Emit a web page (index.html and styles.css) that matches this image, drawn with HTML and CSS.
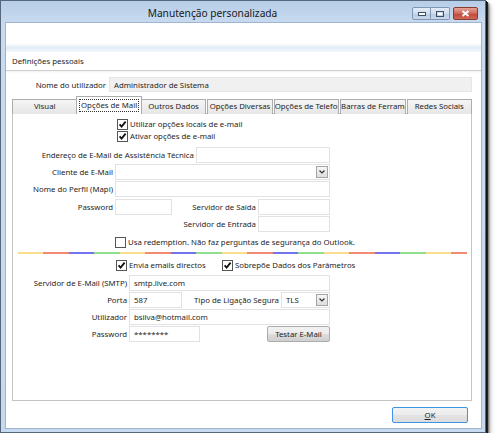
FILE: index.html
```html
<!DOCTYPE html>
<html lang="pt">
<head>
    <meta charset="UTF-8">
    <title>Manutenção personalizada</title>
<link rel="stylesheet" href="styles.css">
</head>
<body>

<div class="window">
    <!-- Title bar -->
    <div class="titlebar">
        <div class="title">Manutenção personalizada</div>
        <div class="controls">
            <span class="ctl min"><svg width="8" height="4" viewBox="0 0 8 4"><rect x="0.5" y="0.5" width="7" height="3" fill="#fff" stroke="#3d4f66"/></svg></span>
            <span class="ctl max"><svg width="8" height="6" viewBox="0 0 8 6"><rect x="0.5" y="0.5" width="7" height="5" fill="none" stroke="#3d4f66"/><rect x="2" y="2" width="4" height="2" fill="#fff"/></svg></span>
            <span class="ctl close"><svg width="9" height="7" viewBox="0 0 9 7"><path d="M1.5 1 L7.5 6 M7.5 1 L1.5 6" stroke="#fff" stroke-width="2"/></svg></span>
        </div>
    </div>

    <div class="client">
        <div class="banner"></div>
        <div class="section-title">Definições pessoais</div>

        <div class="user-row">
            <span class="user-label">Nome do utilizador</span>
            <div class="readonly">Administrador de Sistema</div>
        </div>

        <!-- Tabs -->
        <div class="tabs">
            <div class="tab">Visual</div>
            <div class="tab active"><span class="focus">Opções de Mail</span></div>
            <div class="tab">Outros Dados</div>
            <div class="tab">Opções Diversas</div>
            <div class="tab">Opções de Telefone</div>
            <div class="tab">Barras de Ferramentas</div>
            <div class="tab">Redes Sociais</div>
        </div>

        <div class="panel">
            <div class="form">
                <div class="check-row cb-local">
                    <span class="cb"><svg width="11" height="11" viewBox="0 0 11 11"><rect x="0.5" y="0.5" width="10" height="10" fill="#fff" stroke="#555"/><path d="M2.6 5.4 L4.6 7.6 L8.6 2.6" fill="none" stroke="#111" stroke-width="1.8"/></svg></span>
                    Utilizar opções locais de e-mail
                </div>
                <div class="check-row cb-local">
                    <span class="cb"><svg width="11" height="11" viewBox="0 0 11 11"><rect x="0.5" y="0.5" width="10" height="10" fill="#fff" stroke="#555"/><path d="M2.6 5.4 L4.6 7.6 L8.6 2.6" fill="none" stroke="#111" stroke-width="1.8"/></svg></span>
                    Ativar opções de e-mail
                </div>

                <div class="row r-help">
                    <span class="lbl w-help">Endereço de E-Mail de Assistência Técnica</span>
                    <div class="input w-help-in"></div>
                </div>
                <div class="row r-tight">
                    <span class="lbl w-a">Cliente de E-Mail</span>
                    <div class="input select w-a-in"><span class="drop"><svg width="6" height="4" viewBox="0 0 6 4"><path d="M0.5 0.5 L3 3 L5.5 0.5" fill="none" stroke="#333" stroke-width="1.2"/></svg></span></div>
                </div>
                <div class="row r-tight">
                    <span class="lbl w-a">Nome do Perfil (Mapi)</span>
                    <div class="input w-a-in"></div>
                </div>
                <div class="row r-pass">
                    <span class="lbl w-a">Password</span>
                    <div class="input w-pass"></div>
                    <span class="lbl w-out">Servidor de Saída</span>
                    <div class="input w-srv"></div>
                </div>
                <div class="row r-tight">
                    <span class="lbl w-in">Servidor de Entrada</span>
                    <div class="input w-srv"></div>
                </div>

                <div class="check-row cb-redemption">
                    <span class="cb"><svg width="11" height="11" viewBox="0 0 11 11"><rect x="0.5" y="0.5" width="10" height="10" fill="#fff" stroke="#555"/></svg></span>
                    Usa redemption. Não faz perguntas de segurança do Outlook.
                </div>
            </div>

            <div class="rainbow"></div>

            <div class="form">
                <div class="check-row cb-direct">
                    <span class="cb"><svg width="11" height="11" viewBox="0 0 11 11"><rect x="0.5" y="0.5" width="10" height="10" fill="#fff" stroke="#555"/><path d="M2.6 5.4 L4.6 7.6 L8.6 2.6" fill="none" stroke="#111" stroke-width="1.8"/></svg></span>
                    <span class="cb-text">Envia emails directos</span>
                    <span class="cb"><svg width="11" height="11" viewBox="0 0 11 11"><rect x="0.5" y="0.5" width="10" height="10" fill="#fff" stroke="#555"/><path d="M2.6 5.4 L4.6 7.6 L8.6 2.6" fill="none" stroke="#111" stroke-width="1.8"/></svg></span>
                    Sobrepõe Dados dos Parâmetros
                </div>

                <div class="row r-smtp">
                    <span class="lbl w-b">Servidor de E-Mail (SMTP)</span>
                    <div class="input w-b-in">smtp.live.com</div>
                </div>
                <div class="row r-tight">
                    <span class="lbl w-b">Porta</span>
                    <div class="input w-port">587</div>
                    <span class="lbl w-type">Tipo de Ligação Segura</span>
                    <div class="input select w-tls">TLS<span class="drop"><svg width="6" height="4" viewBox="0 0 6 4"><path d="M0.5 0.5 L3 3 L5.5 0.5" fill="none" stroke="#333" stroke-width="1.2"/></svg></span></div>
                </div>
                <div class="row r-tight">
                    <span class="lbl w-b">Utilizador</span>
                    <div class="input w-b-in">bsilva@hotmail.com</div>
                </div>
                <div class="row r-tight">
                    <span class="lbl w-b">Password</span>
                    <div class="input w-smtp-pass">********</div>
                    <button class="btn test">Testar E-Mail</button>
                </div>
            </div>
        </div>

        <div class="footer">
            <button class="btn ok"><u>O</u>K</button>
        </div>
    </div>
</div>

</body>
</html>
```

FILE: styles.css
```css
body {
    margin: 0;
    padding: 0;
    background: #ffffff;
    font-family: 'Noto Sans', 'Open Sans', sans-serif;
    font-size: 7.8px;
    color: #1e1e1e;
}
.window {
    box-sizing: border-box;
    width: 486px;
    height: 433px;
    border: 1px solid #56677b;
    padding: 0 4px 4px 5px;
    background: linear-gradient(to bottom, #b7cee8 0, #c9dbef 24px, #c6d9ee 100%);
    box-shadow: 1px 1px 0 #111, 2px 2px 0 #222, 3px 3px 2px rgba(0,0,0,0.55), 5px 5px 4px rgba(0,0,0,0.2);
    display: flex;
    flex-direction: column;
}
.titlebar {
    height: 22px;
    display: flex;
    align-items: flex-start;
}
.title {
    flex: 1;
    text-align: center;
    padding-left: 7px;
    font-size: 10.2px;
    line-height: 24px;
    color: #1a1a1a;
}
.controls {
    display: flex;
    margin-top: 6px;
    padding-right: 3px;
}
.ctl {
    box-sizing: border-box;
    height: 13px;
    display: flex;
    align-items: center;
    justify-content: center;
    border: 1px solid #8097b4;
    border-radius: 2px;
    background: linear-gradient(to bottom, #e4edf7 0, #cfdcec 50%, #b9cbe1 51%, #c9d8ea 100%);
}
.min {
    width: 19px;
    border-radius: 2px 0 0 2px;
}
.max {
    width: 19px;
    border-left: none;
    border-radius: 0 2px 2px 0;
    margin-right: 3px;
}
.close {
    width: 25px;
    border-color: #8a3b34;
    background: linear-gradient(to bottom, #e5a597 0, #d0665a 50%, #c0463a 51%, #cf6a55 100%);
}
.client {
    flex: 1;
    background: #ffffff;
    box-shadow: 0 0 0 1px #9fb4cf;
    display: flex;
    flex-direction: column;
}
.banner {
    height: 29px;
    background: linear-gradient(to bottom, #ffffff 0, #ffffff 70%, #e2ebf7 85%, #f6f9fd 100%);
}
.section-title {
    height: 18px;
    line-height: 18px;
    padding-left: 6px;
    border-bottom: 1px solid #cfcfcf;
    box-shadow: 0 1px 2px rgba(0,0,0,0.06);
}
.user-row {
    display: flex;
    align-items: center;
    height: 15px;
    margin-top: 6px;
}
.user-label {
    width: 100px;
    text-align: right;
}
.readonly {
    box-sizing: border-box;
    width: 363px;
    height: 15px;
    margin-left: 3px;
    padding-left: 4px;
    line-height: 14px;
    background: #f0f0f0;
    border: 1px solid #e6e6e6;
}

/* Tabs */
.tabs {
    display: flex;
    align-items: flex-end;
    gap: 1px;
    width: 460px;
    height: 17px;
    margin: 5px 0 -1px 6px;
    position: relative;
    z-index: 1;
}
.tab {
    box-sizing: border-box;
    flex: 1;
    min-width: 0;
    height: 15px;
    line-height: 13px;
    text-align: center;
    white-space: nowrap;
    overflow: hidden;
    text-overflow: clip;
    border: 1px solid #acacac;
    border-bottom: none;
    background: linear-gradient(to bottom, #f5f5f5 0, #e6e6e6 100%);
}
.tab.active {
    height: 18px;
    margin: 0 -2px;
    padding-top: 2px;
    line-height: 11px;
    background: #ffffff;
}
.focus {
    display: inline-block;
    padding: 0 1px;
    border: 1px dotted #333;
    line-height: 11px;
}
.panel {
    box-sizing: border-box;
    width: 460px;
    height: 288px;
    margin-left: 6px;
    border: 1px solid #c4c4c4;
    background: #ffffff;
}
.form {
    width: 317px;
    display: flex;
    flex-direction: column;
}
.row {
    display: flex;
    align-items: center;
    height: 16px;
    margin-top: 1px;
}
.check-row {
    display: flex;
    align-items: center;
    height: 12px;
    white-space: nowrap;
}
.cb {
    flex: none;
    width: 11px;
    height: 11px;
    margin-right: 2px;
}
.cb svg {
    display: block;
}
.cb-local {
    padding-left: 104px;
}
.cb-local:first-child {
    margin-top: 4px;
}
.cb-redemption {
    padding-left: 102px;
    margin-top: 4px;
}
.cb-direct {
    padding-left: 103px;
    margin-top: 5px;
}
.cb-text {
    flex: none;
    width: 93px;
}
.lbl {
    flex: none;
    text-align: right;
    white-space: nowrap;
    padding-right: 2px;
    box-sizing: border-box;
}
.input {
    flex: none;
    box-sizing: border-box;
    height: 16px;
    border: 1px solid #e2e2e2;
    background: #ffffff;
    line-height: 14px;
    padding-left: 4px;
    display: flex;
    align-items: center;
}
.select {
    justify-content: space-between;
    padding-right: 1px;
}
.drop {
    box-sizing: border-box;
    width: 12px;
    height: 12px;
    margin-left: auto;
    border: 1px solid #a5a5a5;
    background: linear-gradient(to bottom, #f6f6f6 0, #dedede 100%);
    display: flex;
    align-items: center;
    justify-content: center;
}
.r-help { margin-top: 5px; }
.r-pass { margin-top: 2px; }
.r-smtp { margin-top: 4px; }
.w-help { width: 183px; }
.w-help-in { width: 134px; }
.w-a { width: 102px; }
.w-a-in { width: 215px; }
.w-pass { width: 57px; }
.w-out { width: 86px; }
.w-in { width: 245px; }
.w-srv { width: 72px; }
.w-b { width: 116px; }
.w-b-in { width: 201px; }
.w-port { width: 53px; }
.w-type { width: 99px; }
.w-tls { width: 49px; }
.w-smtp-pass { width: 71px; }

.rainbow {
    height: 2px;
    margin: 4px 4px 0 5px;
    background: repeating-linear-gradient(to right, #f9df8c 0, #f9df8c 25.5px, #f38a74 25.5px, #f38a74 51px, #7373ee 51px, #7373ee 76.5px, #8fdf8f 76.5px, #8fdf8f 102px);
}
.btn {
    box-sizing: border-box;
    height: 16px;
    padding: 0;
    font-family: inherit;
    font-size: 7.8px;
    color: #1e1e1e;
    border: 1px solid #acacac;
    border-radius: 2px;
    background: linear-gradient(to bottom, #f2f2f2 0, #ebebeb 50%, #dddddd 51%, #cfcfcf 100%);
}
.test {
    width: 63px;
    margin-left: auto;
}
.footer {
    display: flex;
    justify-content: flex-end;
    margin-top: 6px;
    padding-right: 13px;
}
.ok {
    width: 76px;
    border: 1px solid #3c94e5;
    background: linear-gradient(to bottom, #f2f2f2 0, #ebebeb 50%, #e3e3e3 51%, #dcdcdc 100%);
}
.ok u {
    text-decoration: underline;
}
```
